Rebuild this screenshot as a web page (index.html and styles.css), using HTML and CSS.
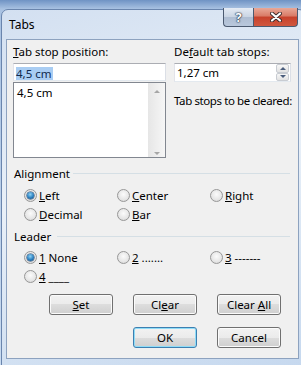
FILE: index.html
```html
<!DOCTYPE html>
<html lang="en">

<head>
  <meta charset="UTF-8" />
  <title>Tabs</title>
  <link rel="stylesheet" href="styles.css">
</head>

<body>
  <div class="window">
    <div class="titlebar">
      <span class="title">Tabs</span>
      <div class="caption-buttons">
        <span class="cap-btn help">?</span>
        <span class="cap-btn close">
          <svg width="12" height="10" viewBox="0 0 12 10">
            <path d="M2 1.5 L10 8.5 M10 1.5 L2 8.5" stroke="#3b2a2a" stroke-width="4" stroke-linecap="round" />
            <path d="M2 1.5 L10 8.5 M10 1.5 L2 8.5" stroke="#fff" stroke-width="2.2" stroke-linecap="round" />
          </svg>
        </span>
      </div>
    </div>

    <div class="dialog">
      <div class="top">
        <div class="col-left">
          <label><u>T</u>ab stop position:</label>
          <div class="textbox"><span class="selected">4,5 cm</span></div>
          <div class="listbox">
            <div class="list-items">
              <div>4,5 cm</div>
            </div>
            <div class="scrollbar">
              <span class="arrow up"></span>
              <span class="arrow down"></span>
            </div>
          </div>
        </div>
        <div class="col-right">
          <label>De<u>f</u>ault tab stops:</label>
          <div class="spinner">
            <span class="value">1,27 cm</span>
            <div class="spin">
              <span class="spin-btn"><span class="tri up"></span></span>
              <span class="spin-btn"><span class="tri down"></span></span>
            </div>
          </div>
          <p class="cleared">Tab stops to be cleared:</p>
        </div>
      </div>

      <div class="group-title">Alignment</div>
      <div class="radios">
        <div class="radio checked"><span class="dot"></span><span><u>L</u>eft</span></div>
        <div class="radio"><span class="dot"></span><span><u>C</u>enter</span></div>
        <div class="radio"><span class="dot"></span><span><u>R</u>ight</span></div>
        <div class="radio"><span class="dot"></span><span><u>D</u>ecimal</span></div>
        <div class="radio"><span class="dot"></span><span><u>B</u>ar</span></div>
      </div>

      <div class="group-title leader">Leader</div>
      <div class="radios leader-rows">
        <div class="radio checked"><span class="dot"></span><span><u>1</u> None</span></div>
        <div class="radio"><span class="dot"></span><span><u>2</u> .......</span></div>
        <div class="radio"><span class="dot"></span><span><u>3</u> -------</span></div>
        <div class="radio"><span class="dot"></span><span><u>4</u> ____</span></div>
      </div>

      <div class="btn-row first">
        <button><u>S</u>et</button>
        <button>Cl<u>e</u>ar</button>
        <button>Clear <u>A</u>ll</button>
      </div>
      <div class="btn-row">
        <button class="default">OK</button>
        <button>Cancel</button>
      </div>
    </div>
  </div>
</body>

</html>
```

FILE: styles.css
```css
body {
  margin: 0;
  width: 301px;
  height: 365px;
  overflow: hidden;
  background: linear-gradient(#6f93c4, #a9c2e2 9px, #c9dbf0);
  font-family: "Noto Sans", sans-serif;
  font-size: 11.5px;
  color: #000;
}

.window {
  box-sizing: border-box;
  width: 305px;
  height: 370px;
  margin: 9px 0 0 1px;
  padding: 0 6px 0 4px;
  border: 1px solid #6a85ad;
  border-radius: 7px 7px 0 0;
  background: linear-gradient(165deg, #d3e0f1, #e9f0f8 45%, #c4d7ee);
}

/* title bar */
.titlebar {
  height: 29px;
  display: flex;
  justify-content: space-between;
  align-items: flex-start;
}

.title {
  padding: 7px 0 0 3px;
  line-height: 15px;
  font-size: 12px;
}

.caption-buttons {
  display: flex;
  margin: -2px 1px 0 0;
}

.cap-btn {
  box-sizing: border-box;
  height: 19px;
  display: flex;
  justify-content: center;
  align-items: center;
  border: 1px solid #4b5a70;
  border-top: none;
}

.help {
  width: 30px;
  border-right: none;
  border-radius: 0 0 0 4px;
  background: linear-gradient(#e4ebf4, #c9d4e3 50%, #aebdd2 50%, #b9c8dc);
  color: #fff;
  font-weight: bold;
  font-size: 13px;
  text-shadow: 0 0 1px #1d2b40, 0 0 1px #1d2b40, 0 0 2px #1d2b40;
}

.close {
  width: 45px;
  border-radius: 0 0 4px 0;
  background: linear-gradient(#e9a897, #d97a66 45%, #c7412b 50%, #d0573f);
}

/* dialog body */
.dialog {
  border: 1px solid #8da2bf;
  background: #f0f0f0;
  padding: 4px 0 10px 6px;
}

.top {
  display: flex;
  gap: 8px;
}

.col-left {
  width: 153px;
}

.col-right {
  width: 117px;
}

label {
  display: block;
  line-height: 15px;
  margin-bottom: 4px;
}

.textbox {
  box-sizing: border-box;
  height: 18px;
  padding: 2px 0 0 2px;
  border: 1px solid;
  border-color: #abadb3 #dbdfe6 #e3e9ef #e2e3ea;
  background: #fff;
}

.selected {
  display: inline-block;
  line-height: 13px;
  padding-right: 1px;
  background: #a9cdf3;
  color: #10294d;
}

.listbox {
  box-sizing: border-box;
  height: 76px;
  margin-top: 1px;
  display: flex;
  border: 1px solid #828790;
  background: #fff;
}

.list-items {
  flex: 1;
  padding: 2px 3px;
  line-height: 15px;
}

.scrollbar {
  width: 17px;
  display: flex;
  flex-direction: column;
  justify-content: space-between;
  align-items: center;
  padding: 7px 0 2px;
  background: linear-gradient(to right, #e6e6e6, #f6f6f6);
}

.arrow {
  width: 0;
  height: 0;
  border-left: 3px solid transparent;
  border-right: 3px solid transparent;
}

.arrow.up {
  border-bottom: 3px solid #a6a6a6;
}

.arrow.down {
  border-top: 3px solid #a6a6a6;
}

.spinner {
  box-sizing: border-box;
  height: 19px;
  display: flex;
  justify-content: space-between;
  border: 1px solid;
  border-color: #abadb3 #dbdfe6 #e3e9ef #e2e3ea;
  background: #fff;
}

.value {
  padding-left: 2px;
  line-height: 17px;
}

.spin {
  width: 13px;
  margin-right: 1px;
  display: flex;
  flex-direction: column;
}

.spin-btn {
  flex: 1;
  display: flex;
  justify-content: center;
  align-items: center;
  border: 1px solid #c8ccd2;
  border-radius: 2px;
  background: linear-gradient(#f7f7f7, #e2e2e2);
}

.tri {
  width: 0;
  height: 0;
  border-left: 3px solid transparent;
  border-right: 3px solid transparent;
}

.tri.up {
  border-bottom: 3px solid #4a5d7c;
}

.tri.down {
  border-top: 3px solid #4a5d7c;
}

.cleared {
  margin: 11px 0 0;
  line-height: 15px;
  white-space: nowrap;
  letter-spacing: -0.4px;
}

/* group boxes */
.group-title {
  display: flex;
  align-items: center;
  margin-top: 8px;
  padding-left: 1px;
  line-height: 15px;
}

.group-title::after {
  content: "";
  flex: 1;
  height: 1px;
  margin: 0 8px 0 3px;
  background: #d5dfe5;
}

.group-title.leader {
  margin-top: 5px;
}

.group-title.leader::after {
  margin-left: 6px;
}

.radios {
  display: grid;
  grid-template-columns: 93px 93px 1fr;
  grid-auto-rows: 19px;
  margin-top: 5px;
  padding-left: 11px;
}

.radios.leader-rows {
  margin-top: 4px;
}

.radio {
  display: flex;
  align-items: center;
  gap: 2px;
}

.dot {
  box-sizing: border-box;
  width: 13px;
  height: 13px;
  display: flex;
  justify-content: center;
  align-items: center;
  border: 1px solid #979797;
  border-radius: 50%;
  background: radial-gradient(circle at 50% 40%, #fbfbfb, #e6e6e6 60%, #d0d0d0);
}

.checked .dot::after {
  content: "";
  width: 7px;
  height: 7px;
  border-radius: 50%;
  background: radial-gradient(circle at 45% 35%, #8fd3f5, #2a7fbf 55%, #0f3f70);
  box-shadow: 0 0 0 0.5px #1b3f66;
}

/* buttons */
.btn-row {
  display: flex;
  justify-content: flex-end;
  gap: 20px;
  margin-top: 12px;
  padding-right: 17px;
}

.btn-row.first {
  margin-top: 8px;
}

button {
  box-sizing: border-box;
  width: 64px;
  height: 21px;
  padding: 0;
  border: 1px solid #707070;
  border-radius: 3px;
  background: linear-gradient(#f2f2f2, #ebebeb 50%, #dddddd 50%, #cfcfcf);
  box-shadow: inset 0 0 0 1px #fbfbfb;
  font-family: "Noto Sans", sans-serif;
  font-size: 11.5px;
  color: #000;
}

button.default {
  border-color: #3c7fb1;
  box-shadow: inset 0 0 0 1px #8fdcf7;
}
```
